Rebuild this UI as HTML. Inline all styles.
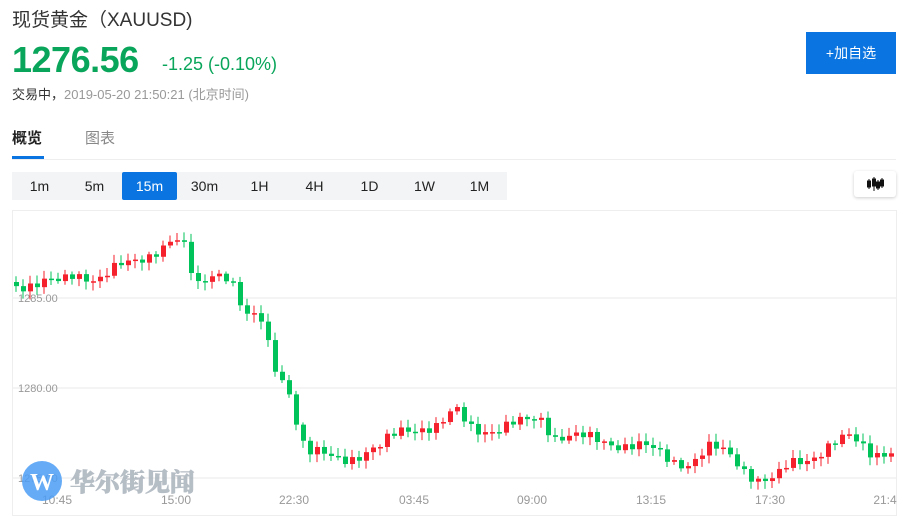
<!DOCTYPE html>
<html><head><meta charset="utf-8"><style>
body{margin:0;width:909px;height:518px;overflow:hidden;background:#fff;font-family:"Liberation Sans","Noto Sans CJK SC",sans-serif;position:relative}
.a{position:absolute;white-space:nowrap}
.tf{position:absolute;top:172px;left:12px;width:495px;height:28px;background:#f3f4f6}
.tf span{position:absolute;top:0;width:55px;height:28px;line-height:28px;text-align:center;font-size:14px;color:#222}
.tf span.on{background:#0a74e0;color:#fff;border-radius:2px}
</style></head><body>
<div class="a" style="left:12px;top:5px;font-size:19px;color:#333">现货黄金（XAUUSD)</div>
<div class="a" style="left:12px;top:39px;font-size:36px;font-weight:bold;color:#09a55a;letter-spacing:-0.5px">1276.56</div>
<div class="a" style="left:162px;top:54px;font-size:18px;color:#09a55a">-1.25 (-0.10%)</div>
<div class="a" style="left:12px;top:84px;font-size:13px;color:#333">交易中，<span style="color:#999">2019-05-20 21:50:21 (北京时间)</span></div>
<div class="a" style="left:806px;top:32px;width:90px;height:42px;background:#0a74e0;color:#fff;font-size:14px;line-height:42px;text-align:center">+加自选</div>
<div class="a" style="left:12px;top:127px;font-size:15px;font-weight:bold;color:#222">概览</div>
<div class="a" style="left:85px;top:127px;font-size:15px;color:#888">图表</div>
<div class="a" style="left:12px;top:156px;width:32px;height:3px;background:#0a74e0"></div>
<div class="a" style="left:12px;top:159px;width:884px;height:1px;background:#eee"></div>
<div class="tf"><span style="left:0">1m</span><span style="left:55px">5m</span><span class="on" style="left:110px">15m</span><span style="left:165px">30m</span><span style="left:220px">1H</span><span style="left:275px">4H</span><span style="left:330px">1D</span><span style="left:385px">1W</span><span style="left:440px">1M</span></div>
<div class="a" style="left:854px;top:171px;width:42px;height:26px;background:#fff;border-radius:3px;box-shadow:0 1px 3px rgba(0,0,0,.2)">
<svg width="42" height="26"><g fill="#111" stroke="#111" stroke-width="1"><line x1="15" y1="8" x2="15" y2="18"/><rect x="13.5" y="10" width="3" height="6"/><line x1="20" y1="6" x2="20" y2="20"/><rect x="18.5" y="8" width="3" height="7"/><line x1="24" y1="9" x2="24" y2="19"/><rect x="22.5" y="11" width="3" height="6"/><line x1="28" y1="7" x2="28" y2="17"/><rect x="26.5" y="9" width="3" height="6"/></g></svg></div>
<div class="a" style="left:12px;top:210px;width:883px;height:304px;border:1px solid #eee"></div>
<svg class="a" style="left:0;top:0" width="909" height="518" id="ch">
<g stroke="#e8e8e8"><line x1="13" y1="298" x2="896" y2="298"/><line x1="13" y1="388" x2="896" y2="388"/><line x1="13" y1="478" x2="896" y2="478"/></g>
<g font-size="11" fill="#999" font-family="Liberation Sans,sans-serif"><text x="18" y="302">1285.00</text><text x="18" y="392">1280.00</text><text x="18" y="482">1275.00</text>
<text x="57" y="504" text-anchor="middle" font-size="12">10:45</text><text x="176" y="504" text-anchor="middle" font-size="12">15:00</text><text x="294" y="504" text-anchor="middle" font-size="12">22:30</text><text x="414" y="504" text-anchor="middle" font-size="12">03:45</text><text x="532" y="504" text-anchor="middle" font-size="12">09:00</text><text x="651" y="504" text-anchor="middle" font-size="12">13:15</text><text x="770" y="504" text-anchor="middle" font-size="12">17:30</text><text x="885" y="504" text-anchor="middle" font-size="12">21:4</text></g>
<g id="cd"></g>
<circle cx="42" cy="481" r="20" fill="#4a9cf5" opacity=".85"/><text x="42" y="490" text-anchor="middle" font-size="24" font-weight="bold" fill="#fff" font-family="Liberation Serif,serif">W</text>
<text x="70" y="491" font-size="25" font-weight="900" fill="#a9b2bb" stroke="#a9b2bb" stroke-width=".6" opacity=".85" font-family="Noto Serif CJK SC,serif">华尔街见闻</text>
</svg>
<script>
var k=[[14,282],[60,285],[75,272],[100,277],[130,265],[160,245],[175,240],[185,252],[195,290],[215,268],[230,275],[245,320],[260,320],[275,365],[290,390],[300,440],[310,455],[330,458],[350,455],[380,450],[400,430],[415,425],[440,428],[455,412],[470,425],[500,430],[520,425],[540,415],[555,435],[580,440],[610,440],[640,448],[670,458],[690,462],[710,450],[730,455],[760,480],[775,482],[790,465],[810,455],[830,445],[850,440],[870,450],[893,450]];
function f(x){for(var i=1;i<k.length;i++)if(x<=k[i][0]){var a=k[i-1],b=k[i];return a[1]+(b[1]-a[1])*(x-a[0])/(b[0]-a[0]);}return 450;}
var h='',prev=f(14);for(var x=16;x<=893;x+=7){var c=f(x),r=Math.sin(x*1.7)*10+Math.sin(x*.37)*6;var cl=c+r*0.6,op=prev;var up=cl<op;var t=Math.min(op,cl),bh=Math.max(Math.abs(cl-op),1.5);var col=up?'#f5222d':'#00c35a';var w1=t-2-Math.abs(Math.sin(x*3.1))*6,w2=t+bh+2+Math.abs(Math.cos(x*2.3))*6;h+='<line x1="'+x+'" x2="'+x+'" y1="'+w1+'" y2="'+w2+'" stroke="'+col+'"/><rect x="'+(x-2)+'" y="'+t+'" width="5" height="'+bh+'" fill="'+col+'"/>';prev=cl;}
document.getElementById('cd').innerHTML=h;
</script>
</body></html>
